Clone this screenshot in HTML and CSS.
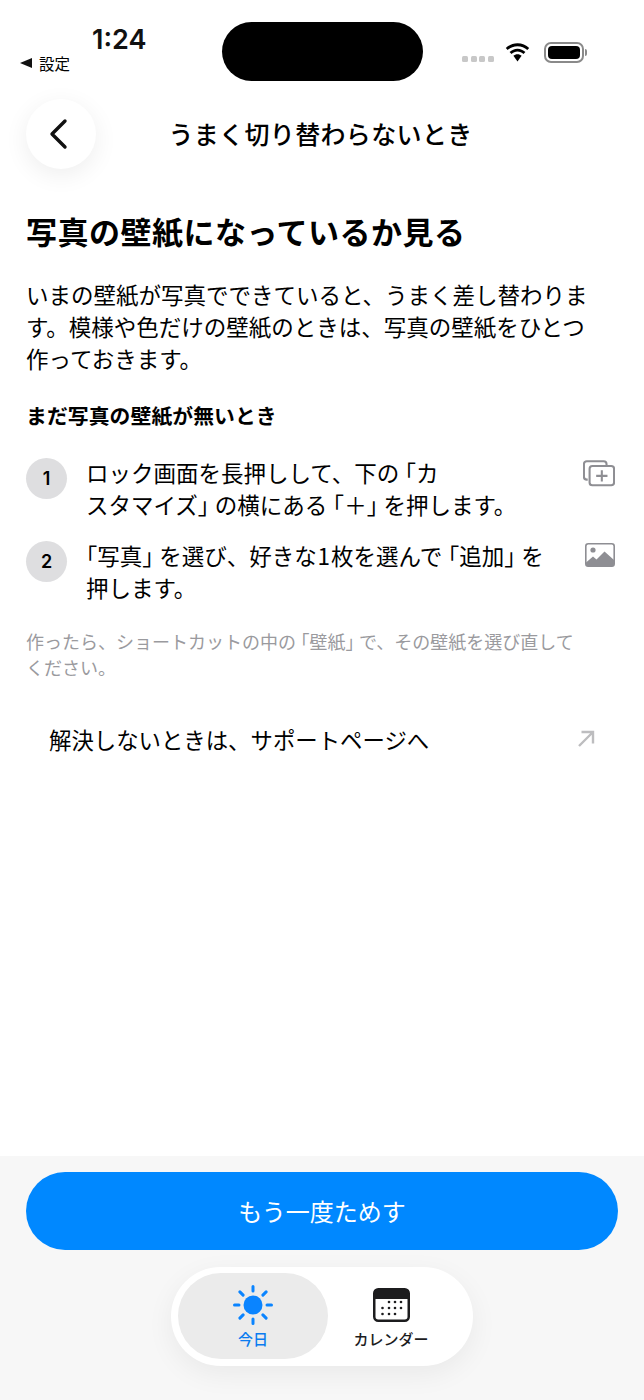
FILE: index.html
```html
<!DOCTYPE html>
<html lang="ja">
<head>
<meta charset="utf-8">
<title>うまく切り替わらないとき</title>
<link rel="stylesheet" href="styles.css">
</head>
<body>
<div class="page">
  <div class="status">
    <div class="status-left">
      <div class="time">1:24</div>
      <div class="back-app"><span class="tri"></span>設定</div>
    </div>
    <div class="island"></div>
    <div class="status-right">
      <div class="dots"><i></i><i></i><i></i><i></i></div>
      <svg class="wifi" width="27" height="20" viewBox="0 0 26 20"><path d="M13 3.200c3.800 0 7.200 1.500 9.800 3.900l1.900-2.100C21.600 2 17.500 .2 13 .2S4.400 2 1.300 5l1.900 2.100C5.800 4.700 9.200 3.200 13 3.200z" fill="#000"/><path d="M13 8.600c2.300 0 4.400 .9 6 2.400l1.900-2.100C18.800 7 16 5.700 13 5.700S7.200 7 5.100 8.900L7 11c1.600-1.500 3.700-2.400 6-2.400z" fill="#000"/><path d="M13 11.200c-1.600 0-3 .6-4.100 1.600L13 18.500l4.100-5.700c-1.100-1-2.500-1.600-4.100-1.600z" fill="#000"/></svg>
      <div class="battery"><div class="battery-fill"></div></div>
      <div class="battery-cap"></div>
    </div>
  </div>

  <header class="nav">
    <div class="back-btn">
      <svg width="24" height="32" viewBox="0 0 24 32"><path d="M20 3 7 16l13 13" fill="none" stroke="#111" stroke-width="3.400" stroke-linecap="round" stroke-linejoin="round"/></svg>
    </div>
    <h1 class="nav-title">うまく切り替わらないとき</h1>
  </header>

  <main class="content">
    <h2 class="heading">写真の壁紙になっているか見る</h2>
    <p class="lead">いまの壁紙が写真でできていると、うまく差し替わります。模様や色だけの壁紙のときは、写真の壁紙をひとつ作っておきます。</p>
    <h3 class="sub">まだ写真の壁紙が無いとき</h3>
    <ol class="steps">
      <li class="step">
        <span class="num">1</span>
        <p class="step-text">ロック画面を長押しして、下の<span class="open">「</span>カ<br>スタマイズ<span class="close">」</span>の横にある<span class="open">「</span>&#xFF0B;<span class="close">」</span>を押します。</p>
        <svg class="step-icon" width="32" height="27" viewBox="0 0 34 28"><path d="M5 20.500H4a3 3 0 0 1-3-3V4a3 3 0 0 1 3-3h18a3 3 0 0 1 3 3v1" fill="none" stroke="#8e8e93" stroke-width="2.200"/><rect x="7" y="6" width="26" height="20.500" rx="3" fill="#fff" stroke="#8e8e93" stroke-width="2.200"/><path d="M20 10.500v12M14 16.500h12" stroke="#8e8e93" stroke-width="2.200"/></svg>
      </li>
      <li class="step step-two">
        <span class="num">2</span>
        <p class="step-text"><span class="open open-first">「</span>写真<span class="close">」</span>を選び、好きな<span class="digit">1</span>枚を選んで<span class="open">「</span>追加<span class="close">」</span>を<br>押します。</p>
        <svg class="step-icon step-icon-photo" width="30" height="24" viewBox="0 0 30 24"><rect x=".8" y=".8" width="28.400" height="22.400" rx="2.500" fill="#fff" stroke="#8e8e93" stroke-width="1.600"/><path d="M1 19.500 8 13.500l3.500 3L19.500 8.500 29 17v4a2.500 2.500 0 0 1-2.500 2.500h-23A2.500 2.500 0 0 1 1 21z" fill="#8e8e93"/><circle cx="8" cy="7" r="2.600" fill="#8e8e93"/></svg>
      </li>
    </ol>
    <p class="note">作ったら、ショートカットの中の<span class="open">「</span>壁紙<span class="close">」</span>で、その壁紙を選び直して<br>ください。</p>
    <div class="link-row">
      <span>解決しないときは、サポートページへ</span>
      <svg width="18" height="18" viewBox="0 0 18 18"><path d="M2 16 16 2M4.500 2H16v11.500" fill="none" stroke="#bdbdbf" stroke-width="2.400"/></svg>
    </div>
  </main>

  <footer class="footer">
    <div class="cta">もう一度ためす</div>
    <nav class="tabs">
      <div class="tab tab-active">
        <svg width="40" height="40" viewBox="0 0 40 40"><circle cx="20" cy="20" r="9.500" fill="#0a84ff"/><g stroke="#0a84ff" stroke-width="3" stroke-linecap="round"><path d="M20 1.500v4.500M20 34v4.500M1.500 20H6M34 20h4.500M6.900 6.900l3.200 3.200M29.900 29.900l3.200 3.200M6.900 33.100l3.200-3.200M29.900 10.100l3.200-3.200"/></g></svg>
        <span class="tab-label">今日</span>
      </div>
      <div class="tab tab-cal">
        <svg width="37" height="34" viewBox="0 0 37 34"><rect x="1.250" y="1.250" width="34.500" height="31.500" rx="4" fill="#fff" stroke="#1c1c1e" stroke-width="2.500"/><path d="M1 5a4 4 0 0 1 4-4h27a4 4 0 0 1 4 4v6H1z" fill="#1c1c1e"/><g fill="#1c1c1e"><circle cx="16" cy="14" r="1.300"/><circle cx="22" cy="14" r="1.300"/><circle cx="28" cy="14" r="1.300"/><circle cx="9.500" cy="20" r="1.300"/><circle cx="16" cy="20" r="1.300"/><circle cx="22" cy="20" r="1.300"/><circle cx="28" cy="20" r="1.300"/><circle cx="9.500" cy="26" r="1.300"/><circle cx="16" cy="26" r="1.300"/><circle cx="22" cy="26" r="1.300"/></g></svg>
        <span class="tab-label tab-label-dark">カレンダー</span>
      </div>
    </nav>
  </footer>
</div>
</body>
</html>
```
FILE: styles.css
```css
* { box-sizing: border-box; }
html, body { margin: 0; padding: 0; background: #fff; }
body {
  font-family: "Noto Sans CJK JP", "Noto Sans", sans-serif;
  color: #000;
}
.page {
  width: 644px;
  height: 1400px;
  display: flex;
  flex-direction: column;
  overflow: hidden;
}
.open { font-feature-settings: "halt"; padding-left: .25em; }
.open-first { padding-left: 0; }
.close { font-feature-settings: "halt"; padding-right: .25em; }
.digit { padding: 0 .04em; }
.status {
  height: 99px;
  flex: none;
  display: flex;
  align-items: flex-start;
}
.status-left {
  width: 222px;
  padding: 24px 0 0 20px;
}
.time {
  font-family: Inter, sans-serif;
  font-size: 27px;
  font-weight: 600;
  line-height: 32px;
  margin-left: 72px;
  color: #111;
}
.back-app {
  display: flex;
  align-items: center;
  gap: 7px;
  font-size: 15.500px;
  line-height: 22px;
  margin-top: -4px;
}
.tri {
  width: 0;
  height: 0;
  border-style: solid;
  border-width: 5.500px 12px 5.500px 0;
  border-color: transparent #111 transparent transparent;
}
.island {
  width: 201px;
  height: 59px;
  margin-top: 22px;
  background: #000;
  border-radius: 30px;
}
.status-right {
  display: flex;
  align-items: flex-start;
  margin: 42px 0 0 39px;
}
.dots { display: flex; gap: 2.500px; margin-top: 14px; margin-right: 10px; }
.dots i { width: 6px; height: 6px; border-radius: 1.500px; background: #c8c8c8; display: block; }
.wifi { margin-right: 13px; margin-top: 1px; }
.battery {
  width: 40px;
  height: 21px;
  border: 2px solid #8a8a8a;
  border-radius: 7px;
  padding: 2px;
}
.battery-fill { width: 100%; height: 100%; background: #000; border-radius: 4px; }
.battery-cap { width: 2px; height: 7px; background: #8a8a8a; border-radius: 0 2px 2px 0; margin: 7px 0 0 1px; }

.nav {
  flex: none;
  height: 70px;
  padding-left: 26px;
  display: flex;
  align-items: center;
}
.back-btn {
  width: 70px;
  height: 70px;
  border-radius: 50%;
  background: #fff;
  box-shadow: 0 6px 24px rgba(0, 0, 0, .07);
  display: flex;
  align-items: center;
  justify-content: center;
  padding-right: 8px;
  flex: none;
}
.nav-title {
  margin: -2px 0 0 36px;
  width: 377px;
  text-align: center;
  font-size: 25px;
  font-weight: 500;
  line-height: 36px;
  color: #000;
  letter-spacing: .35px;
}
.content { flex: 1; padding: 40px 26px 0 26px; }
.heading { margin: 0; font-size: 31px; line-height: 44px; font-weight: 700; letter-spacing: .5px; }
.lead { margin: 25px 0 0; font-size: 22.500px; line-height: 32px; font-weight: 400; width: 570px; }
.sub { margin: 26px 0 0; font-size: 20.800px; line-height: 30px; font-weight: 700; letter-spacing: .1px; }
.steps { list-style: none; margin: 0; padding: 0; }
.step { display: flex; align-items: flex-start; margin-top: 26px; }
.step-two { margin-top: 19px; }
.num {
  width: 41px;
  height: 41px;
  margin-top: 2px;
  border-radius: 50%;
  background: #dedee0;
  display: flex;
  align-items: center;
  justify-content: center;
  font-family: Inter, sans-serif;
  font-size: 18px;
  font-weight: 600;
  flex: none;
}
.step-text { margin: 0 0 0 19px; width: 480px; font-size: 22.500px; line-height: 32px; flex: none; white-space: nowrap; }
.step-icon { margin: 4px 0 0 17px; flex: none; }
.step-icon-photo { margin-left: 19px; }
.note { margin: 25px 0 0; font-size: 18px; line-height: 26px; color: #9a9a9e; width: 580px; }
.link-row {
  display: flex;
  align-items: center;
  justify-content: space-between;
  margin-top: 43px;
  padding: 0 23px 0 23px;
  font-size: 22.400px;
  line-height: 32px;
  color: #000;
}
.footer {
  flex: none;
  height: 244px;
  background: #f7f7f7;
  padding: 16px 26px 0;
}
.cta {
  height: 78px;
  width: 592px;
  border-radius: 39px;
  background: #0088ff;
  color: #fff;
  display: flex;
  align-items: center;
  justify-content: center;
  font-size: 24px;
  padding-bottom: 2px;
}
.tabs {
  width: 302px;
  height: 99px;
  margin: 17px 0 0 145px;
  padding: 6px 7px;
  border-radius: 50px;
  background: #fff;
  box-shadow: 0 8px 28px rgba(0, 0, 0, .06);
  display: flex;
}
.tab {
  width: 150px;
  height: 86px;
  border-radius: 43px;
  display: flex;
  flex-direction: column;
  align-items: center;
  padding-top: 12px;
  flex: none;
}
.tab-active { background: #ebebeb; }
.tab-cal { width: 126px; }
.tab svg { display: block; flex: none; height: 40px; }
.tab-label { font-size: 15px; line-height: 20px; font-weight: 500; margin-top: 4px; color: #0a7cf0; white-space: nowrap; }
.tab-label-dark { color: #1c1c1e; }
```
